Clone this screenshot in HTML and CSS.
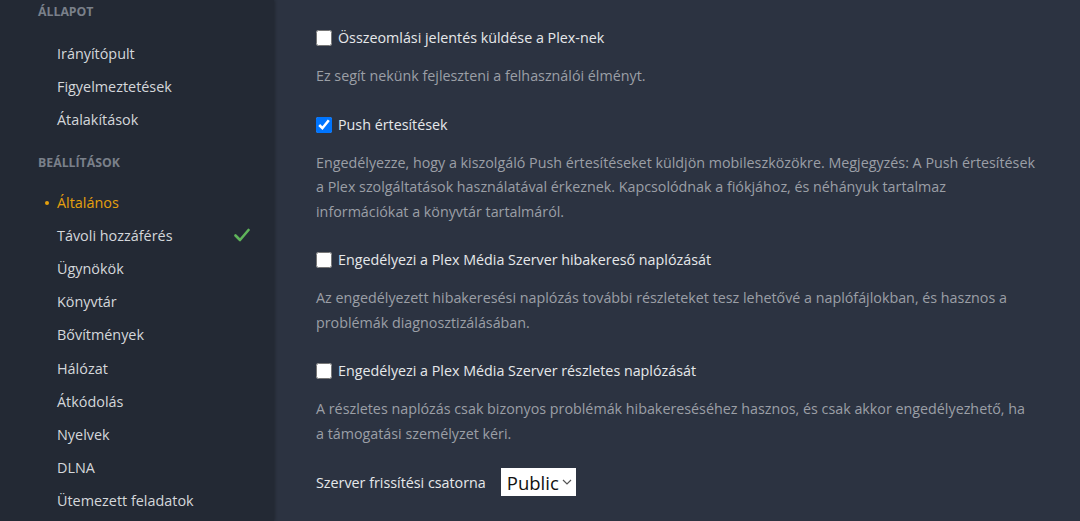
FILE: index.html
```html
<!DOCTYPE html>
<html lang="hu">
<head>
  <meta charset="UTF-8" />
  <title>Beállítások - Általános</title>
  <link rel="stylesheet" href="styles.css">
</head>
<body>

  <!-- Oldalsáv -->
  <nav class="sidebar">
    <h3 class="nav-heading">Állapot</h3>
    <a class="nav-item">Irányítópult</a>
    <a class="nav-item">Figyelmeztetések</a>
    <a class="nav-item">Átalakítások</a>

    <h3 class="nav-heading">Beállítások</h3>
    <a class="nav-item active">Általános</a>
    <a class="nav-item">Távoli hozzáférés
      <svg class="ok" width="16" height="14" viewBox="0 0 16 14"><path d="M1.5 7.5l4.5 4.5 8.5-10" fill="none" stroke="#5fb35a" stroke-width="2.6" stroke-linecap="round" stroke-linejoin="round"/></svg>
    </a>
    <a class="nav-item">Ügynökök</a>
    <a class="nav-item">Könyvtár</a>
    <a class="nav-item">Bővítmények</a>
    <a class="nav-item">Hálózat</a>
    <a class="nav-item">Átkódolás</a>
    <a class="nav-item">Nyelvek</a>
    <a class="nav-item">DLNA</a>
    <a class="nav-item">Ütemezett feladatok</a>
  </nav>

  <!-- Beállítások -->
  <main class="content">
    <div class="setting">
      <label class="check-row"><input type="checkbox"> Összeomlási jelentés küldése a Plex-nek</label>
      <p class="help">Ez segít nekünk fejleszteni a felhasználói élményt.</p>
    </div>

    <div class="setting">
      <label class="check-row"><input type="checkbox" checked> Push értesítések</label>
      <p class="help">Engedélyezze, hogy a kiszolgáló Push értesítéseket küldjön mobileszközökre. Megjegyzés: A Push értesítések a Plex szolgáltatások használatával érkeznek. Kapcsolódnak a fiókjához, és néhányuk tartalmaz információkat a könyvtár tartalmáról.</p>
    </div>

    <div class="setting">
      <label class="check-row"><input type="checkbox"> Engedélyezi a Plex Média Szerver hibakereső naplózását</label>
      <p class="help">Az engedélyezett hibakeresési naplózás további részleteket tesz lehetővé a naplófájlokban, és hasznos a problémák diagnosztizálásában.</p>
    </div>

    <div class="setting">
      <label class="check-row"><input type="checkbox"> Engedélyezi a Plex Média Szerver részletes naplózását</label>
      <p class="help">A részletes naplózás csak bizonyos problémák hibakereséséhez hasznos, és csak akkor engedélyezhető, ha a támogatási személyzet kéri.</p>
    </div>

    <div class="select-row">
      <span>Szerver frissítési csatorna</span>
      <div class="select">Public
        <svg width="10" height="6" viewBox="0 0 10 6"><path d="M1 1l4 4 4-4" fill="none" stroke="#555" stroke-width="1.2"/></svg>
      </div>
    </div>
  </main>

</body>
</html>
```

FILE: styles.css
```css
body {
  margin: 0;
  height: 521px;
  overflow: hidden;
  display: flex;
  font-family: "Open Sans", sans-serif;
  background: #2c3341;
}
.sidebar {
  width: 274px;
  flex-shrink: 0;
  background: #232934;
  box-shadow: 1px 0 3px rgba(0, 0, 0, 0.25);
  padding-top: 2px;
  display: flex;
  flex-direction: column;
}
.nav-heading {
  margin: 16px 0 13px 38px;
  font-size: 12.3px;
  line-height: 20px;
  font-weight: 700;
  text-transform: uppercase;
  color: #7a808a;
}
.nav-heading:first-child {
  margin-top: 0;
  margin-bottom: 15px;
}
.nav-item {
  height: 33.2px;
  padding: 0 24px 0 57px;
  display: flex;
  align-items: center;
  justify-content: space-between;
  font-size: 14.4px;
  color: #d4d7db;
  position: relative;
}
.nav-item.active {
  color: #e5a00d;
}
.nav-item.active::before {
  content: "";
  position: absolute;
  left: 45px;
  top: 15px;
  width: 4px;
  height: 4px;
  border-radius: 50%;
  background: #e5a00d;
}
.content {
  flex: 1;
  padding: 28px 44.5px 0 42px;
  display: flex;
  flex-direction: column;
}
.setting {
  margin-bottom: 26px;
}
.check-row {
  display: flex;
  align-items: center;
  gap: 6px;
  font-size: 14.3px;
  line-height: 20px;
  color: #e6e8ea;
}
.check-row input {
  width: 16px;
  height: 16px;
  margin: 0;
}
.help {
  margin: 16px 0 0;
  font-size: 14.3px;
  line-height: 24.5px;
  color: #9b9fa6;
}
.select-row {
  display: flex;
  align-items: center;
  gap: 15px;
  font-size: 14.3px;
  color: #e6e8ea;
  margin-top: -4px;
}
.select {
  background: #fff;
  color: #111;
  height: 28px;
  padding: 0 4px 0 6px;
  display: flex;
  align-items: center;
  gap: 3px;
  font-size: 18.5px;
}
```
